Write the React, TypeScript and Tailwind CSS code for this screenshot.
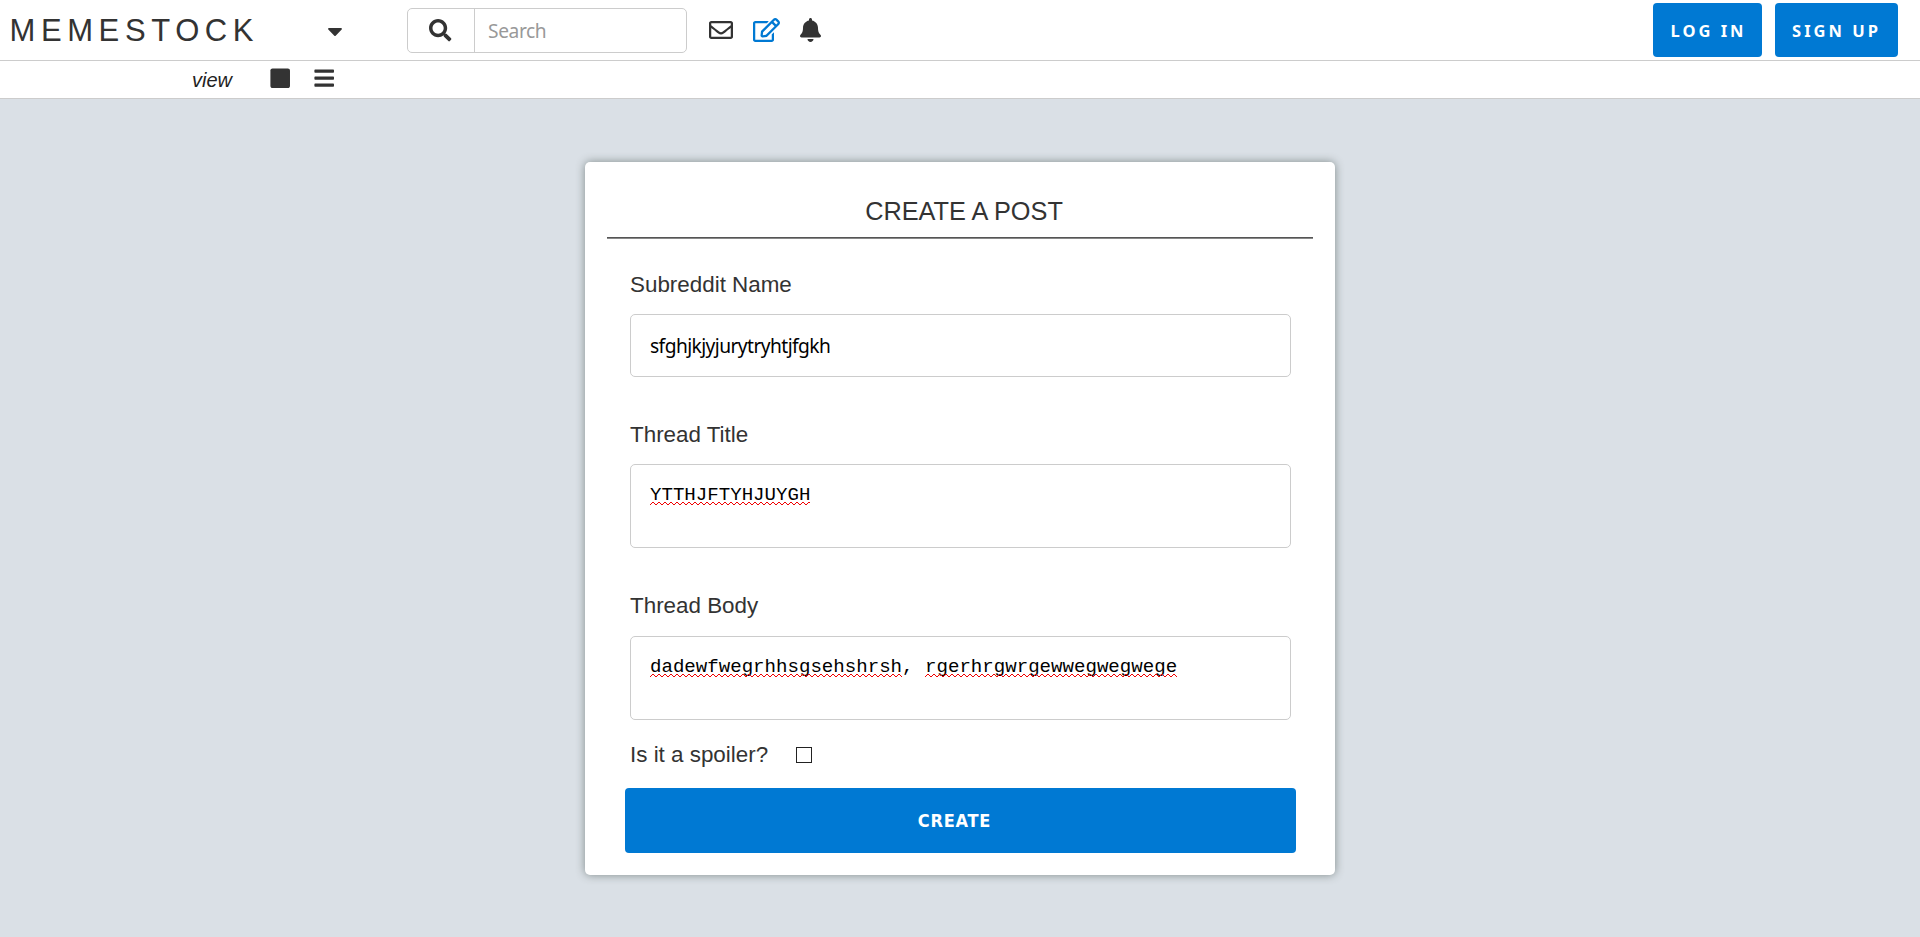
import React from "react";
import { FaBars, FaBell, FaCaretDown, FaRegEdit, FaRegEnvelope, FaSearch, FaSquare } from "react-icons/fa";

const ui = "font-['Noto_Sans',sans-serif]";

function Misspelled({ children, id }: { children: string; id: string }) {
  return (
    <span className="relative inline-block">
      {children}
      <svg className="absolute left-0 top-[19px] h-[3px] w-full" shapeRendering="crispEdges">
        <defs>
          <pattern id={id} width="6" height="3" patternUnits="userSpaceOnUse">
            <path d="M0 2h1v1H0zM1 1h1v1H1zM2 0h2v1H2zM4 1h1v1H4zM5 2h1v1H5z" fill="#f00000" />
          </pattern>
        </defs>
        <rect width="100%" height="3" fill={`url(#${id})`} />
      </svg>
    </span>
  );
}

const label = "block text-[22.4px] leading-[26px] text-[#333]";
const box = "rounded-[5px] border border-[#ccc] bg-white px-[19px] text-black";
const mono = "h-[84px] pt-[18px] font-['Liberation_Mono',monospace] text-[19.1px] leading-[24px] whitespace-pre";

export default function App() {
  return (
    <div className="flex h-[937px] w-full flex-col overflow-hidden bg-[#dae0e6] font-['Liberation_Sans',Arial,sans-serif] text-[#333]">
      <header className="flex h-[61px] shrink-0 items-start border-b border-[#ccc] bg-white">
        <div className="w-[318px] pl-[9.5px] pt-[14px] text-[31px] leading-[34px] tracking-[5.6px]">MEMESTOCK</div>
        <FaCaretDown className="ml-[5px] mt-[19px] size-6" />
        <div className="ml-[60px] mt-2 flex h-[45px] w-[280px] items-center rounded-[5px] border border-[#ccc]">
          <div className="flex h-full w-[67px] items-center justify-center border-r border-[#ccc]">
            <FaSearch className="mr-px size-[22.4px]" />
          </div>
          <span className={`${ui} pl-[13px] pt-px text-[19.2px] tracking-[-0.4px] text-[#999]`}>Search</span>
        </div>
        <div className="ml-[22px] mt-[18px] flex items-start">
          <FaRegEnvelope className="size-6" />
          <FaRegEdit className="ml-5 h-6 w-[27px] text-[#0079d3]" />
          <FaBell className="ml-[19.5px] h-6 w-[21px]" />
        </div>
        <div className={`${ui} ml-auto mr-[22px] mt-[3px] flex gap-[13px] text-[16.5px] font-bold tracking-[3px] text-white`}>
          <button className="h-[54px] w-[109px] rounded-[4px] bg-[#0079d3] pl-0.5 pt-0.5">LOG IN</button>
          <button className="h-[54px] w-[123px] rounded-[4px] bg-[#0079d3] pt-0.5">SIGN UP</button>
        </div>
      </header>
      <nav className="flex h-[38px] shrink-0 items-start border-b border-[#ccc] bg-white pl-[192px]">
        <span className="mt-[7px] w-[77px] text-[20px] italic leading-[24px] text-[#222]">view</span>
        <FaSquare className="mt-[6px] size-[22.4px]" />
        <FaBars className="ml-[22px] mt-[6px] size-[22.4px]" />
      </nav>
      <main className="flex justify-center pt-[63px]">
        <form className="flex h-[713px] w-[750px] flex-col rounded-[5px] bg-white px-[22px] shadow-[0_0_10px_#808b8b]">
          <h1 className="ml-2 mt-[35px] h-[40px] text-center text-[25.3px] leading-[28px]">CREATE A POST</h1>
          <div className="h-[2px] border-b border-t border-b-[#888] border-t-[#555]" />
          <div className="ml-[23px] mr-[22px] mt-[33px]">
            <label className={`${label} h-[42px]`}>Subreddit Name</label>
            <div className={`${box} ${ui} flex h-[63px] items-center pt-0.5 text-[19.2px] tracking-[-0.57px]`}>sfghjkjyjurytryhtjfgkh</div>
            <label className={`${label} mt-[45px] h-[42px]`}>Thread Title</label>
            <div className={`${box} ${mono}`}><Misspelled id="wave-title">YTTHJFTYHJUYGH</Misspelled></div>
            <label className={`${label} mt-[45px] h-[43px]`}>Thread Body</label>
            <div className={`${box} ${mono}`}>
              <Misspelled id="wave-body-a">dadewfwegrhhsgsehshrsh</Misspelled>, <Misspelled id="wave-body-b">rgerhrgwrgewwegwegwege</Misspelled>
            </div>
            <label className="mt-[22px] flex h-[26px] items-center text-[22.4px] leading-[26px]">
              <span className="w-[166px]">Is it a spoiler?</span>
              <input type="checkbox" className="size-4 appearance-none border border-[#222] bg-white" />
            </label>
          </div>
          <button type="button" className="ml-[18px] mr-[17px] mt-[20px] h-[65px] rounded-[4px] bg-[#0079d3] pr-[12px] font-['DejaVu_Sans_Condensed','DejaVu_Sans',sans-serif] text-[18px] font-bold tracking-[0.8px] text-white [font-stretch:condensed]">CREATE</button>
        </form>
      </main>
    </div>
  );
}
